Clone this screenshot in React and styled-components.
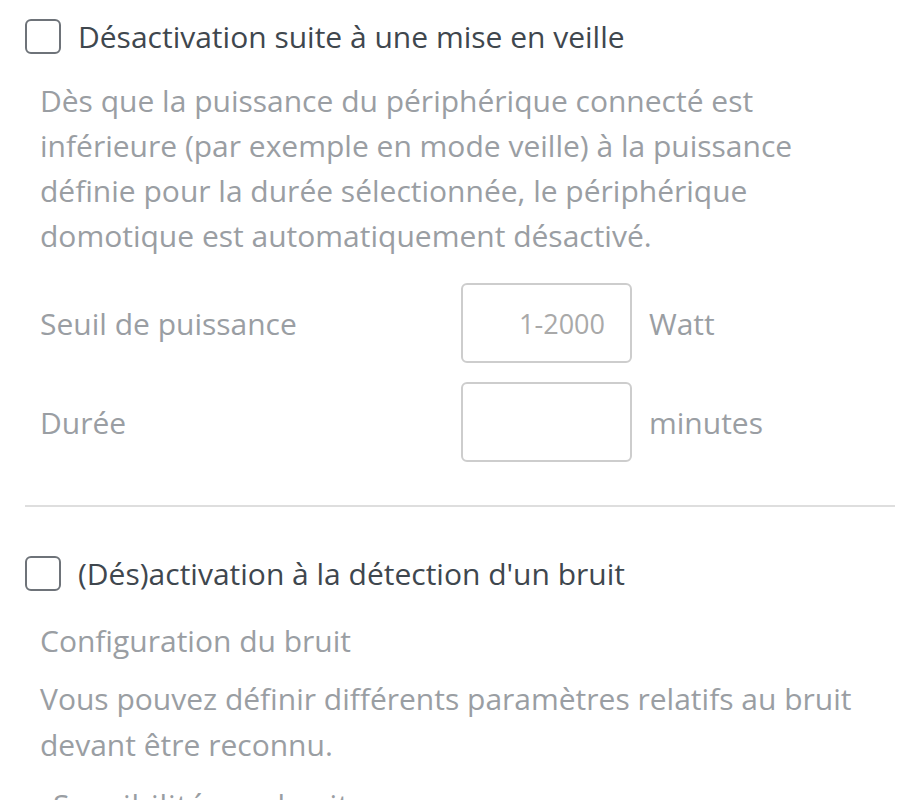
import React from "react";
import styled, { createGlobalStyle } from "styled-components";

const GlobalStyle = createGlobalStyle`
  body {
    margin: 0;
    background: #ffffff;
    font-family: "Open Sans", "Noto Sans", sans-serif;
  }
`;

const Page = styled.div`
  width: 920px;
  height: 800px;
  overflow: hidden;
  padding: 0 25px;
  box-sizing: border-box;
`;

const CheckRow = styled.label`
  display: flex;
  align-items: center;
  gap: 17px;
  height: 36px;
  margin-top: ${(p) => p.top || 0}px;
  color: #3f474e;
  font-size: 30px;
`;

const Box = styled.span`
  width: 36px;
  height: 35px;
  box-sizing: border-box;
  border: 2px solid #6e7379;
  border-radius: 6px;
  flex-shrink: 0;
`;

const Text = styled.p`
  margin: ${(p) => p.top || 0}px 0 0 15px;
  color: #9a9ea3;
  font-size: 30px;
  line-height: ${(p) => p.lh || 45}px;
  white-space: nowrap;
`;

const FieldRow = styled.div`
  display: grid;
  grid-template-columns: 404px 171px auto;
  column-gap: 17px;
  align-items: center;
  margin: ${(p) => p.top || 0}px 0 0 15px;
  color: #9a9ea3;
  font-size: 30px;
`;

const Input = styled.input`
  width: 171px;
  height: 80px;
  box-sizing: border-box;
  border: 2px solid #cdcdcd;
  border-radius: 6px;
  padding: 0 25px;
  text-align: right;
  font-family: inherit;
  font-size: 27px;
  color: #555;
  outline: none;
  &::placeholder {
    color: #a9a9a9;
  }
`;

const Divider = styled.hr`
  margin: 43px 0 0 0;
  border: 0;
  height: 2px;
  background: #dedede;
`;

const Spaced = styled.p`
  margin: 16px 0 0 28px;
  color: #9a9ea3;
  font-size: 30px;
  letter-spacing: 1px;
  white-space: nowrap;
`;

export default function App() {
  return (
    <Page>
      <GlobalStyle />
      <CheckRow top={18}>
        <Box />
        Désactivation suite à une mise en veille
      </CheckRow>
      <Text top={24}>
        Dès que la puissance du périphérique connecté est
        <br />
        inférieure (par exemple en mode veille) à la puissance
        <br />
        définie pour la durée sélectionnée, le périphérique
        <br />
        domotique est automatiquement désactivé.
      </Text>
      <FieldRow top={25}>
        <span>Seuil de puissance</span>
        <Input placeholder="1-2000" />
        <span>Watt</span>
      </FieldRow>
      <FieldRow top={19}>
        <span>Durée</span>
        <Input />
        <span>minutes</span>
      </FieldRow>
      <Divider />
      <CheckRow top={48}>
        <Box />
        (Dés)activation à la détection d'un bruit
      </CheckRow>
      <Text top={27} lh={46}>
        Configuration du bruit
      </Text>
      <Text top={12} lh={46}>
        Vous pouvez définir différents paramètres relatifs au bruit
        <br />
        devant être reconnu.
      </Text>
      <Spaced>Sensibilité aux bruits :</Spaced>
    </Page>
  );
}
